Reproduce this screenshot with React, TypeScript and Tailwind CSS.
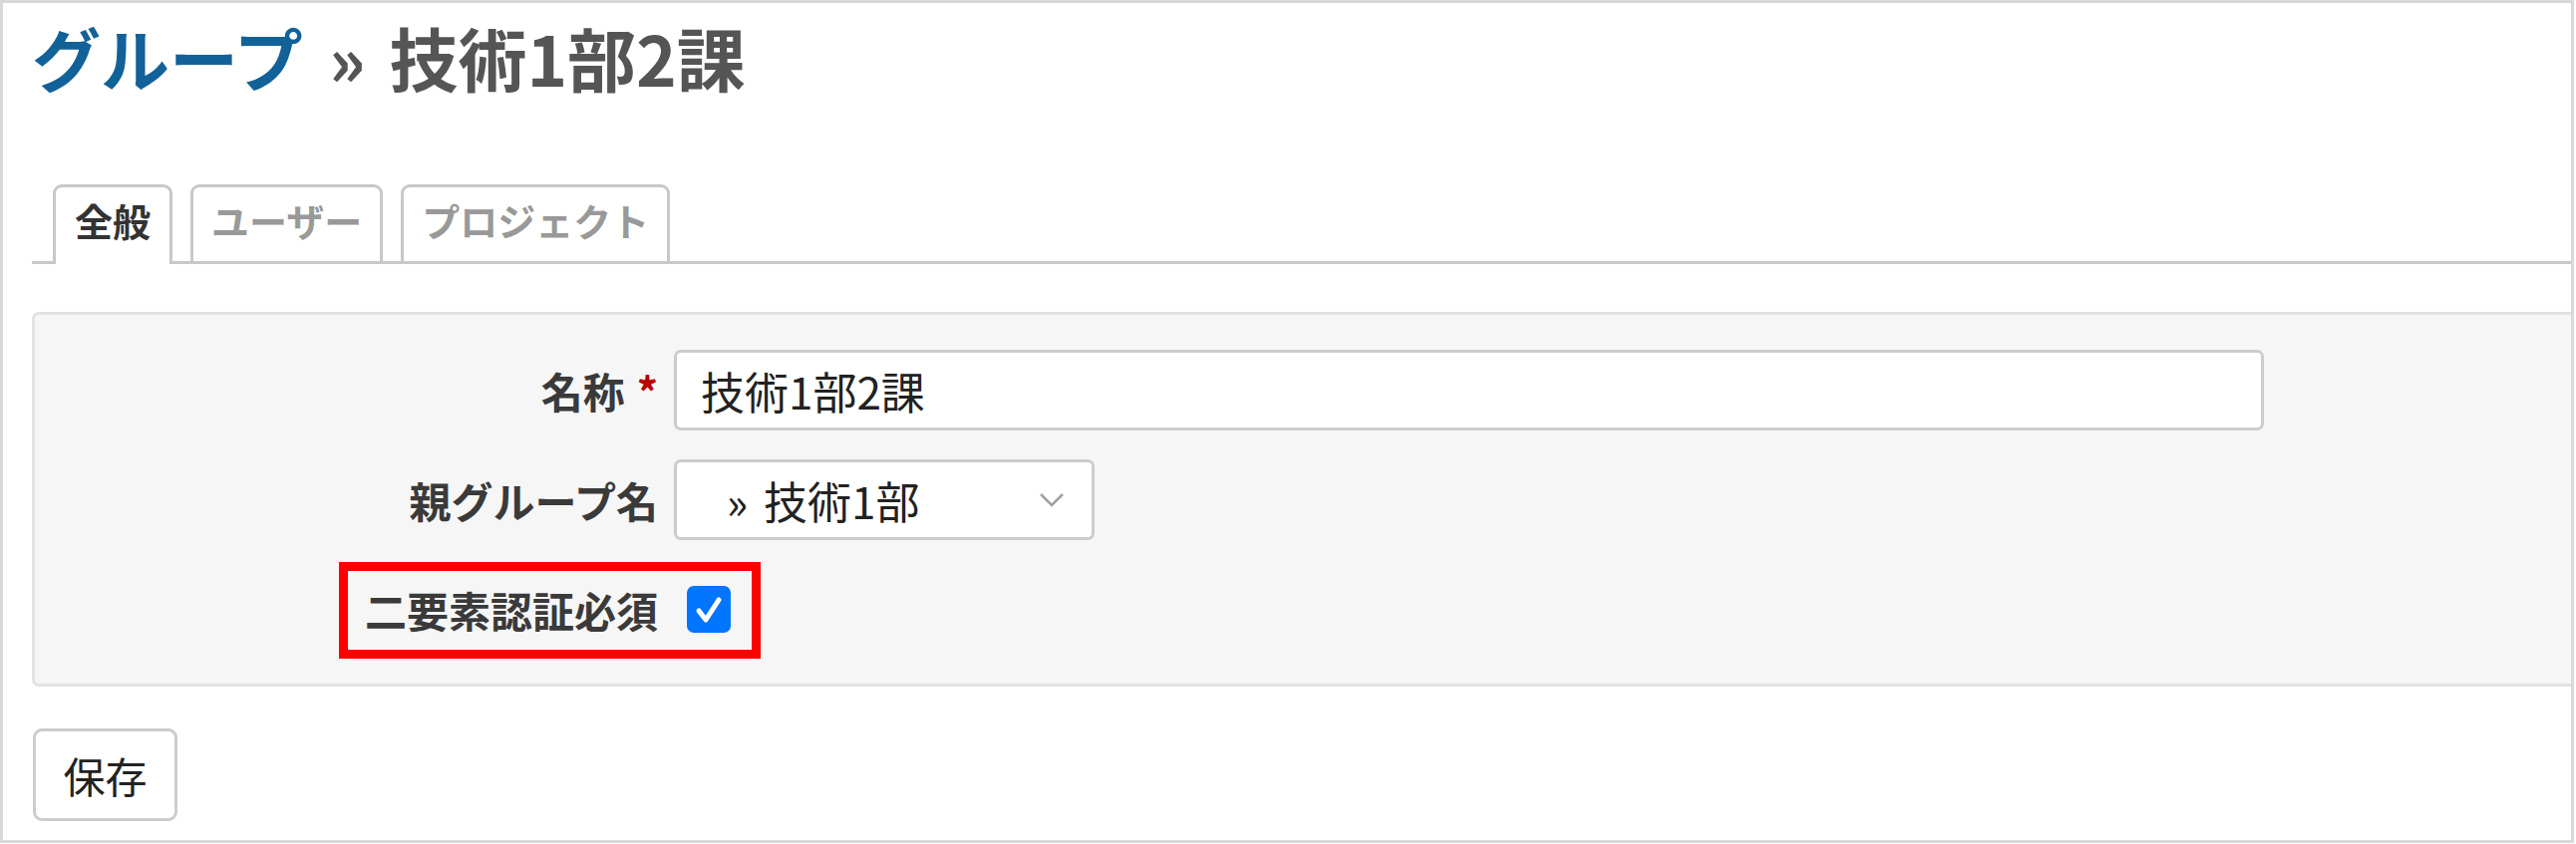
import React from "react";

export default function App() {
  return (
    <div className="w-[2584px] h-[847px] bg-white font-['Noto_Sans_CJK_JP','Noto_Sans',sans-serif]">
      <div className="w-[2582px] h-[846px] border-[3px] border-[#d9d9d9] overflow-hidden pl-[29px] pt-[14px]">
        {/* Title */}
        <h2 className="flex items-center whitespace-nowrap text-[69px] leading-[80px] font-bold text-[#555555]">
          <span className="text-[#126199]">グループ</span>
          <span className="ml-[26px] mr-[24px]">»</span>
          <span>技術1部2課</span>
        </h2>

        {/* Tabs */}
        <div className="mt-[88px] flex items-end h-[80px] border-b-[3px] border-[#c8c8c8] pl-[21px] gap-[18px] whitespace-nowrap">
          <div className="h-[80px] -mb-[3px] bg-white border-[3px] border-b-0 border-[#c8c8c8] rounded-t-[9px] px-[19px] text-[38px] leading-[66px] pb-[11px] font-bold text-[#333333]">
            全般
          </div>
          <div className="h-[77px] bg-white border-[3px] border-b-0 border-[#c8c8c8] rounded-t-[9px] px-[18px] text-[38px] leading-[66px] pb-[8px] font-bold text-[#999999]">
            ユーザー
          </div>
          <div className="h-[77px] bg-white border-[3px] border-b-0 border-[#c8c8c8] rounded-t-[9px] px-[18px] text-[38px] leading-[66px] pb-[8px] font-bold text-[#999999]">
            プロジェクト
          </div>
        </div>

        {/* Panel */}
        <div className="mt-[48px] bg-[#f6f6f6] border-[3px] border-r-0 border-[#e2e2e2] rounded-l-[7px] pt-[35px] pb-[34px] flex flex-col gap-[29px]">
          {/* 名称 */}
          <div className="flex items-center h-[81px]">
            <div className="w-[625px] text-right text-[42px] font-bold text-[#3a3a3a] whitespace-nowrap">
              名称<span className="ml-[12px] text-[#bb0000]">*</span>
            </div>
            <input
              readOnly
              defaultValue="技術1部2課"
              className="ml-[16px] w-[1595px] h-[81px] bg-white border-[3px] border-[#cccccc] rounded-[7px] pl-[24px] text-[44px] text-[#222222] outline-none font-['Noto_Sans_CJK_JP','Noto_Sans',sans-serif]"
            />
          </div>

          {/* 親グループ名 */}
          <div className="flex items-center h-[81px]">
            <div className="w-[625px] text-right text-[42px] font-bold text-[#3a3a3a] whitespace-nowrap">
              親グループ名
            </div>
            <div className="ml-[16px] w-[422px] h-[81px] bg-white border-[3px] border-[#cccccc] rounded-[7px] flex items-center pl-[50px] pr-[27px] text-[44px] text-[#222222] whitespace-nowrap">
              <span>»</span>
              <span className="ml-[16px]">技術1部</span>
              <svg className="ml-auto" width="26" height="16" viewBox="0 0 26 16" fill="none">
                <polyline points="2,2 13,13 24,2" stroke="#a0a0a0" strokeWidth="2.5" fill="none" />
              </svg>
            </div>
          </div>

          {/* 二要素認証必須 */}
          <div className="relative flex items-center h-[81px]">
            <div className="w-[625px] text-right text-[42px] font-bold text-[#3a3a3a] whitespace-nowrap">
              二要素認証必須
            </div>
            <div className="ml-[29px] w-[44px] h-[47px] rounded-[7px] bg-[#0075ff] flex items-center justify-center">
              <svg width="30" height="32" viewBox="0 0 30 32" fill="none">
                <polyline points="5,17 12,26 25,6" stroke="#ffffff" strokeWidth="5" strokeLinecap="round" strokeLinejoin="round" fill="none" />
              </svg>
            </div>
            <div className="absolute left-[305px] top-[-7px] w-[423px] h-[97px] border-[9px] border-[#ff0000] pointer-events-none" />
          </div>
        </div>

        {/* Save button */}
        <button className="mt-[42px] ml-[1px] w-[145px] h-[93px] bg-white border-[3px] border-[#cccccc] rounded-[9px] text-[42px] text-[#222222] font-['Noto_Sans_CJK_JP','Noto_Sans',sans-serif]">
          保存
        </button>
      </div>
    </div>
  );
}
